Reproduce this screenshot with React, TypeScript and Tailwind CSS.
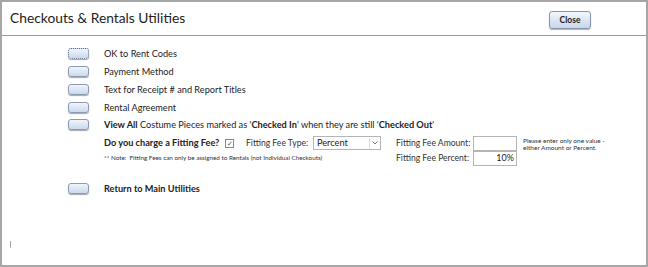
const links = [
  { label: <>OK to Rent Codes</>, focused: true },
  { label: <>Payment Method</> },
  { label: <>Text for Receipt # and Report Titles</> },
  { label: <>Rental Agreement</> },
  {
    label: (
      <>
        <b>View All</b> Costume Pieces marked as '<b>Checked In</b>' when they are still '<b>Checked Out</b>'
      </>
    ),
  },
];

function SmallButton({ focused }: { focused?: boolean }) {
  return (
    <span
      className={`block w-[21px] h-[11px] rounded-[3px] bg-gradient-to-b from-[#f1f5fb] to-[#cbd8ec] shadow-[0_1px_1px_rgba(0,0,0,0.35)] ${
        focused ? "border border-dotted border-[#5a6a88]" : "border border-[#8c9bb5]"
      }`}
    />
  );
}

export default function App() {
  return (
    <div
      className="w-[648px] h-[267px] bg-white border-2 border-[#a6a6a6] text-[#222] overflow-hidden whitespace-nowrap"
      style={{ fontFamily: 'Lato, "Open Sans", sans-serif' }}
    >
      <div className="h-[34px] flex items-center justify-between pl-[8px] pr-[55px] border-b border-[#9a9a9a]">
        <h1 className="text-[13.8px] text-[#222]">Checkouts &amp; Rentals Utilities</h1>
        <button className="w-[42px] h-[18px] mt-[3px] rounded-[3px] border border-[#8794ad] bg-gradient-to-b from-[#f4f7fc] to-[#c8d5ea] shadow-[0_1px_1px_rgba(0,0,0,0.3)] text-[8.5px] font-bold text-[#222] leading-none">
          Close
        </button>
      </div>

      <div className="pl-[66px] pt-[11px] text-[9.2px]">
        <div className="flex flex-col gap-[4.3px]">
          {links.map((l, i) => (
            <div key={i} className="flex items-center h-[13.5px]">
              <SmallButton focused={l.focused} />
              <span className="ml-[15px] leading-none">{l.label}</span>
            </div>
          ))}
        </div>

        <div className="flex ml-[36px] mt-[4px]">
          <div className="w-[292px]">
            <div className="flex items-center h-[15px]">
              <span className="font-bold w-[121px]">Do you charge a Fitting Fee?</span>
              <span className="w-[9px] h-[9px] border border-[#888] flex items-center justify-center text-[7px] leading-none text-[#555]">
                ✓
              </span>
              <span className="ml-[12px] w-[67px] text-[8.6px] text-[#333]">Fitting Fee Type:</span>
              <div className="w-[68px] h-[14px] border border-[#b5b5b5] flex items-center justify-between pl-[3px] pr-[1px]">
                <span>Percent</span>
                <span className="w-[10px] h-[11px] border-l border-[#ddd] flex items-center justify-center">
                  <svg width="6" height="4" viewBox="0 0 6 4">
                    <path d="M0.5 0.5 L3 3 L5.5 0.5" stroke="#777" strokeWidth="1" fill="none" />
                  </svg>
                </span>
              </div>
            </div>
            <div className="text-[6.3px] mt-[2px] text-[#333]">
              ** Note:&nbsp; Fitting Fees can only be assigned to Rentals (not Individual Checkouts)
            </div>
          </div>

          <div className="flex">
            <div className="flex flex-col text-[8.6px]">
              <div className="flex items-center h-[15px]">
                <span className="w-[77px] text-[#333]">Fitting Fee Amount:</span>
                <span className="w-[44px] h-[15px] border border-[#b5b5b5]" />
              </div>
              <div className="flex items-center h-[15px]">
                <span className="w-[77px] text-[#333]">Fitting Fee Percent:</span>
                <span className="w-[44px] h-[15px] border border-[#b5b5b5] flex items-center justify-end pr-[2px] text-[9px]">
                  10%
                </span>
              </div>
            </div>
            <div className="ml-[6px] text-[6.5px] leading-[7px] text-[#333] pt-[1px]">
              Please enter only one value -
              <br />
              either Amount or Percent.
            </div>
          </div>
        </div>

        <div className="flex items-center h-[13px] mt-[16px]">
          <SmallButton />
          <span className="ml-[15px] font-bold leading-none">Return to Main Utilities</span>
        </div>
      </div>

      <div className="ml-[8px] mt-[46px] w-px h-[7px] bg-[#aaa]" />
    </div>
  );
}
